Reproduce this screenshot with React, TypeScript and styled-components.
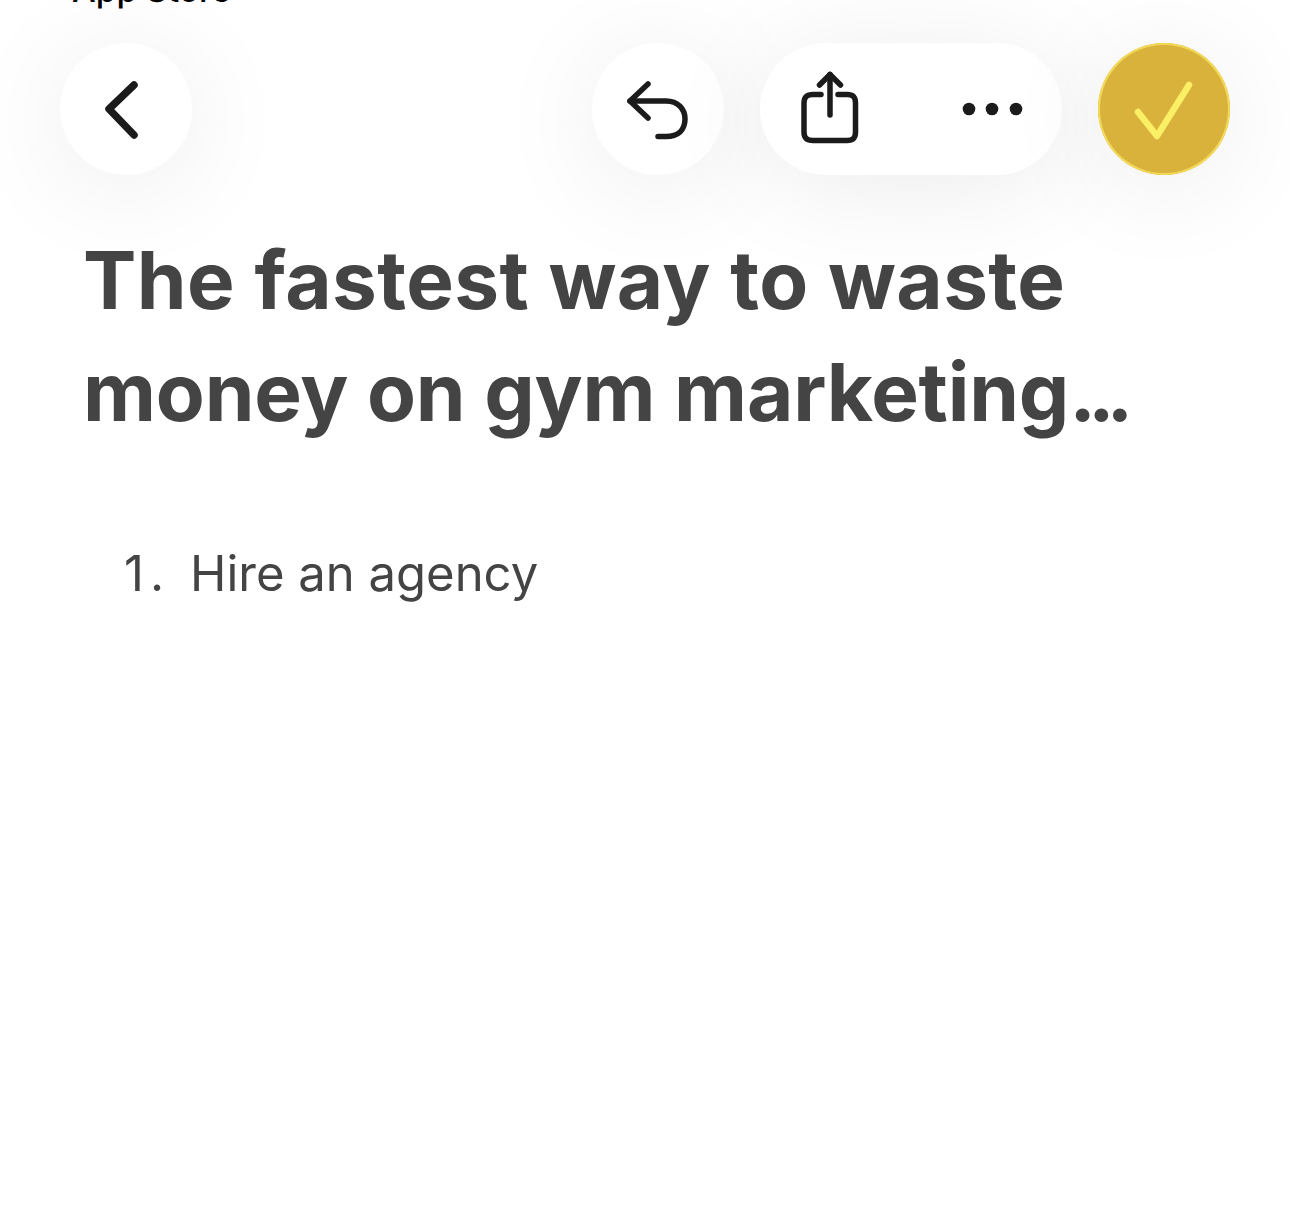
import React from "react";
import styled, { createGlobalStyle } from "styled-components";

const Global = createGlobalStyle`
  html, body { margin: 0; padding: 0; background: #fff; }
  #root { width: 1290px; height: 1209px; overflow: hidden; }
`;

const Page = styled.div`
  width: 1290px;
  height: 1209px;
  overflow: hidden;
  background: #fff;
  font-family: Inter, "Liberation Sans", sans-serif;
  display: flex;
  flex-direction: column;
`;

const StatusLabel = styled.div`
  height: 73px;
  margin-top: -28px;
  margin-bottom: -2px;
  padding-left: 72px;
  font-size: 33.500px;
  line-height: 36px;
  font-weight: 500;
  color: #000;
  flex: none;
`;

const Toolbar = styled.div`
  display: flex;
  align-items: center;
  padding: 0 60px;
  gap: 36px;
  flex: none;
`;

const Spacer = styled.div`
  flex: 1;
`;

const RoundButton = styled.div`
  width: 132px;
  height: 132px;
  border-radius: 50%;
  background: #fff;
  box-shadow: 0 12px 110px rgba(0, 0, 0, 0.08);
  display: flex;
  align-items: center;
  justify-content: center;
`;

const Pill = styled.div`
  width: 302px;
  height: 132px;
  border-radius: 66px;
  background: #fff;
  box-shadow: 0 12px 110px rgba(0, 0, 0, 0.08);
  display: flex;
  align-items: center;
  justify-content: space-between;
  padding: 0 38px 0 39px;
  box-sizing: border-box;
`;

const DoneButton = styled(RoundButton)`
  background: #d9b23c;
  box-shadow: 0 12px 110px rgba(0, 0, 0, 0.08), inset 0 0 0 2px #f2d957;
`;

const Title = styled.h1`
  margin: 49px 0 0;
  padding: 0 83px;
  font-size: 80px;
  line-height: 112px;
  font-weight: 700;
  color: #444;
  white-space: nowrap;
`;

const TitleLine = styled.span<{ $spacing: number }>`
  display: block;
  letter-spacing: ${(p) => p.$spacing}px;
`;

const Ellipsis = styled.span`
  letter-spacing: -8px;
`;

const List = styled.ol`
  list-style: none;
  margin: 96px 0 0;
  padding: 0 0 0 124px;
  display: flex;
  align-items: baseline;
  font-size: 49px;
  line-height: 60px;
  font-weight: 400;
  color: #444;
`;

const Marker = styled.span`
  width: 66px;
  flex: none;
  letter-spacing: 6px;
`;

const Icon = styled.svg`
  display: block;
  fill: none;
  stroke: #1b1b1b;
  stroke-width: 5.5;
  stroke-linecap: round;
  stroke-linejoin: round;
`;

const Dots = styled.svg`
  display: block;
  fill: #1b1b1b;
`;

export default function App() {
  return (
    <Page>
      <Global />
      <StatusLabel>App Store</StatusLabel>
      <Toolbar>
        <RoundButton>
          <Icon width="132" height="132" viewBox="0 0 132 132" style={{ strokeWidth: 7.5 }}>
            <path d="M74 42 L49 66 L74 92" />
          </Icon>
        </RoundButton>
        <Spacer />
        <RoundButton>
          <Icon width="132" height="132" viewBox="0 0 132 132">
            <path d="M56 41 L38 58 L56 75" />
            <path d="M38 58 H74 C86 58 93 66 93 76 C93 87 86 93.500 74 93.500 H66" />
          </Icon>
        </RoundButton>
        <Pill>
          <Icon width="62" height="76" viewBox="0 0 62 76">
            <path d="M31 3.500 V44" />
            <path d="M20.500 14 L31 3.500 L41.500 14" />
            <path d="M22 23.500 H14 C8 23.500 5 26 5 32 V61 C5 67 8 69.500 14 69.500 H48 C54 69.500 56.500 67 56.500 61 V32 C56.500 26 54 23.500 48 23.500 H39" />
          </Icon>
          <Dots width="62" height="16" viewBox="0 0 62 16">
            <circle cx="7" cy="8" r="6.300" />
            <circle cx="30" cy="8" r="6.300" />
            <circle cx="54" cy="8" r="6.300" />
          </Dots>
        </Pill>
        <DoneButton>
          <Icon width="132" height="132" viewBox="0 0 132 132" style={{ stroke: "#fbef66", strokeWidth: 6.5 }}>
            <path d="M40 69 L59 93 L91 42" />
          </Icon>
        </DoneButton>
      </Toolbar>
      <Title>
        <TitleLine $spacing={0.42}>The fastest way to waste</TitleLine>
        <TitleLine $spacing={-0.2}>
          money on gym marketing<Ellipsis>...</Ellipsis>
        </TitleLine>
      </Title>
      <List>
        <Marker>1.</Marker>
        <li>Hire an agency</li>
      </List>
    </Page>
  );
}
